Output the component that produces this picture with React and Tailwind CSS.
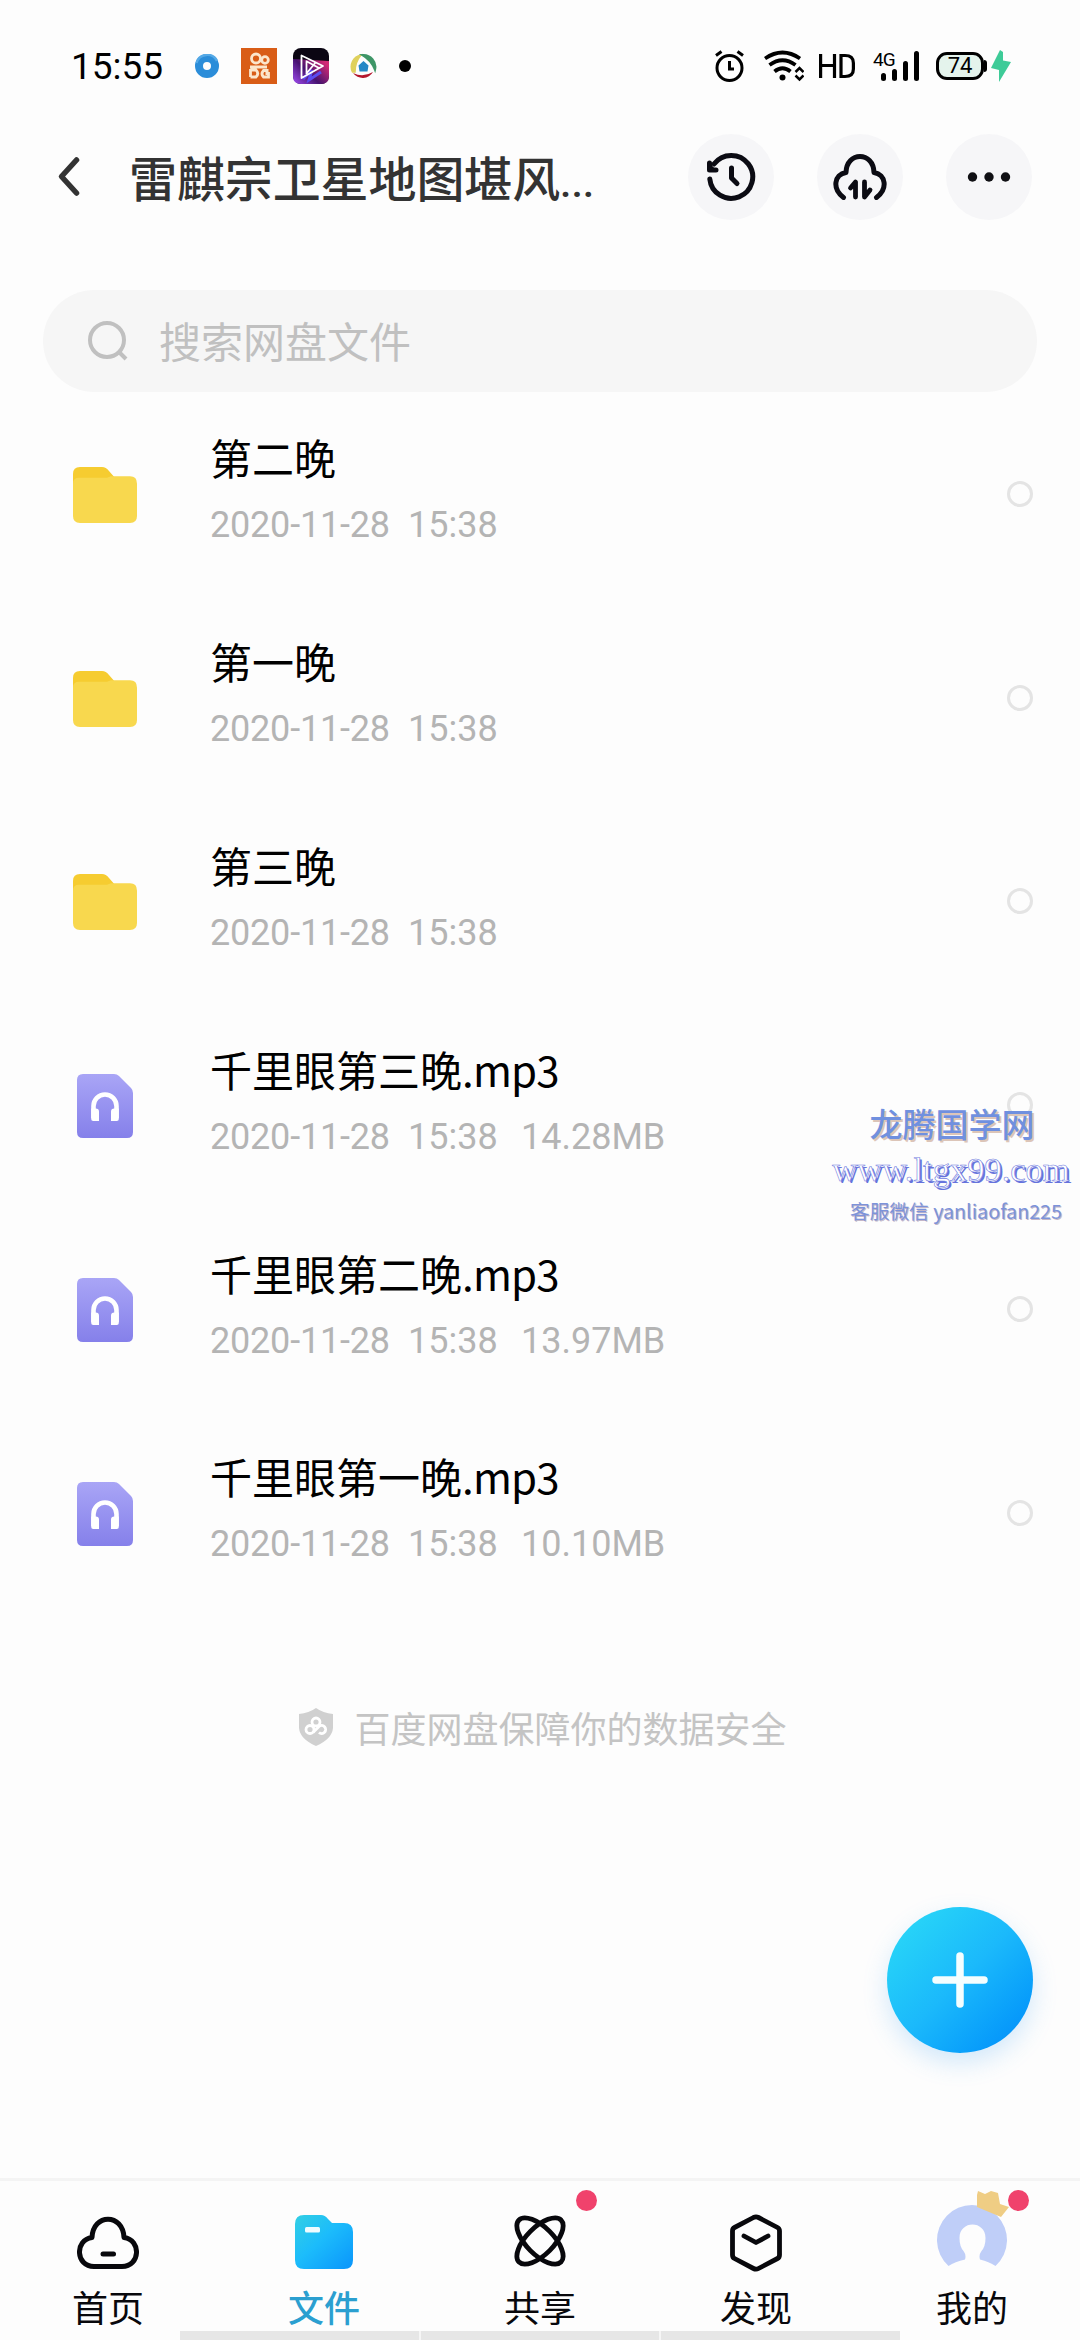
import React, { useState } from 'react';

const FILES = [
  { id: 1, type: 'folder', name: '第二晚', date: '2020-11-28', time: '15:38' },
  { id: 2, type: 'folder', name: '第一晚', date: '2020-11-28', time: '15:38' },
  { id: 3, type: 'folder', name: '第三晚', date: '2020-11-28', time: '15:38' },
  { id: 4, type: 'audio', name: '千里眼第三晚', ext: '.mp3', date: '2020-11-28', time: '15:38', size: '14.28MB' },
  { id: 5, type: 'audio', name: '千里眼第二晚', ext: '.mp3', date: '2020-11-28', time: '15:38', size: '13.97MB' },
  { id: 6, type: 'audio', name: '千里眼第一晚', ext: '.mp3', date: '2020-11-28', time: '15:38', size: '10.10MB' },
];

const FolderIcon = () => (
  <svg className="mt-[2px]" width="65" height="56" viewBox="0 0 64 57" preserveAspectRatio="none">
    <path d="M0 7Q0 0 7 0H29Q33 0 36 4L41 10V22H0Z" fill="#f6cc30" />
    <path d="M0 17Q0 11 6 11H34L38 9.500H57Q64 9.500 64 17V50Q64 57 57 57H7Q0 57 0 50Z" fill="#f8d84e" />
  </svg>
);

const AudioIcon = () => (
  <svg className="mt-[2px]" width="56" height="64" viewBox="0 0 56 64">
    <defs>
      <linearGradient id="audio" x1="0" y1="0" x2="0" y2="1">
        <stop offset="0" stopColor="#a9a5f6" />
        <stop offset="1" stopColor="#8580ea" />
      </linearGradient>
    </defs>
    <path d="M6 0H37Q40 0 42 2L54 14Q56 16 56 19V58Q56 64 50 64H6Q0 64 0 58V6Q0 0 6 0Z" fill="url(#audio)" />
    <path d="M16.500 44V32a11.500 11.500 0 0 1 23 0V44" fill="none" stroke="#fff" strokeWidth="4.600" />
    <path d="M14.200 34.500h4.500q3.300 0 3.300 3.300V47h-5.800q-2 0-2-2zM41.800 34.500h-4.500q-3.300 0-3.300 3.300V47h5.800q2 0 2-2z" fill="#fff" />
  </svg>
);

const StatusBar = () => (
  <div className="h-[132px] flex items-center justify-between pl-[71px] pr-[69px]">
    <div className="flex items-center">
      <span className="w-[124px] text-[37px] leading-none text-black font-['Roboto',sans-serif]">15:55</span>
      <svg width="24" height="24" viewBox="0 0 24 24">
        <circle cx="12" cy="12" r="8" fill="none" stroke="#2b8dd9" strokeWidth="8" />
        <path d="M1.500 9A11 11 0 0 1 22 7" fill="none" stroke="#55a9e6" strokeWidth="2.500" />
      </svg>
      <svg className="ml-[22px]" width="36" height="36" viewBox="0 0 36 36">
        <rect width="36" height="36" fill="#d95d17" />
        <g fill="none" stroke="#fbe6cc" strokeWidth="2.800">
          <circle cx="15" cy="10.500" r="4.500" />
          <circle cx="24" cy="12" r="3.300" />
          <path d="M9 19h17M9.500 21v8M9.500 22h5.500q3.500 3.500 0 7h-5.500M27.500 22.500h-5q-3 3.500 0 6.500h5v-3.500h-3" />
        </g>
      </svg>
      <svg className="ml-4" width="36" height="36" viewBox="0 0 36 36">
        <defs>
          <linearGradient id="clip" x1="0" y1="1" x2="1" y2="0.3">
            <stop offset="0" stopColor="#a34df5" />
            <stop offset="0.5" stopColor="#45126f" />
            <stop offset="1" stopColor="#d32a76" />
          </linearGradient>
        </defs>
        <rect width="36" height="36" rx="8" fill="#0b0613" />
        <path d="M0 11L36 13V28Q36 36 28 36H8Q0 36 0 28Z" fill="url(#clip)" />
        <path d="M10 31l9-9-3 10 12-8" stroke="#5b4bf0" strokeWidth="3" fill="none" />
        <path d="M8.500 7.500V30L30 18Z M13.500 12.500V25.500M13 13L26 20M13 26L23 14" fill="none" stroke="#fff" strokeWidth="1.800" strokeLinejoin="round" />
      </svg>
      <svg className="ml-[21px]" width="27" height="27" viewBox="0 0 27 27" fill="none">
        <path d="M2.500 19A12 12 0 0 1 11 2Q5 9 5 19Z" fill="#dfd15d" stroke="#dfd15d" strokeWidth="1.500" />
        <path d="M12 2A12 12 0 0 1 25 17Q21 7 12 2Z" fill="#3e9667" stroke="#3e9667" strokeWidth="2" />
        <path d="M3 20Q13 25 23 19A12 12 0 0 1 3 20Z" fill="#b4172d" />
        <path d="M13.500 8l5 4.500-1 6h-8l-1-6z" fill="#2588c6" />
      </svg>
      <span className="ml-[22px] w-3 h-3 rounded-full bg-black" />
    </div>

    <div className="flex items-center">
      <svg width="29" height="32" viewBox="0 0 29 32" fill="none" stroke="#000" strokeWidth="3">
        <circle cx="14.500" cy="18" r="12.500" />
        <path d="M14.500 11v8H19M1 5.500L6.500 1.500M28 5.500L22.500 1.500" />
      </svg>
      <svg className="ml-5" width="40" height="32" viewBox="0 0 40 32" fill="none" stroke="#000" strokeWidth="3.800">
        <path d="M1 8.500Q18.500-3.500 36 8.500M5.500 15Q18.500 5.500 31.500 15M10.500 21.500Q18.500 15 26.500 21.500" />
        <circle cx="18.500" cy="27.500" r="3" fill="#000" stroke="none" />
        <path d="M31.500 22l4-4 4 4M31.500 25.500l4 4 4-4" strokeWidth="2.500" />
      </svg>
      <svg className="ml-[15px]" width="36" height="26" viewBox="0 0 36 26" fill="none" stroke="#000" strokeWidth="3.200">
        <path d="M1.600 1V25M15.500 1V25M1.500 12.500H15.500M22 2.500V23.500H26Q34.400 23.500 34.400 16V10Q34.400 2.500 26 2.500Z" />
      </svg>
      <div className="relative ml-[18px] w-[46px] h-[30px] flex items-end justify-end gap-1.5">
        <span className="absolute left-0 -top-px text-[19px] leading-none tracking-[-1px] font-['Roboto',sans-serif] text-black">4G</span>
        <i className="w-[5px] h-2 rounded-sm bg-black" />
        <i className="w-[5px] h-3 rounded-sm bg-black" />
        <i className="w-[5px] h-5 rounded-sm bg-black" />
        <i className="w-[5px] h-[30px] rounded-sm bg-black" />
      </div>
      <div className="ml-[17px] w-12 h-7 border-[3px] border-black rounded-[11px] bg-[#e4f3ec] flex items-center justify-center text-[22px] leading-none font-['Roboto',sans-serif] text-black">74</div>
      <i className="w-[3px] h-3 rounded-r bg-black" />
      <svg className="ml-1" width="20" height="32" viewBox="0 0 20 32">
        <path d="M9 0L0 18l8 2v12l12-20-8-1.500V2z" fill="#3ecb98" />
      </svg>
    </div>
  </div>
);

const RoundButton = ({ children }) => (
  <button className="w-[86px] h-[86px] rounded-full bg-[#f6f6f8] flex items-center justify-center">{children}</button>
);

const Header = () => (
  <header className="h-[90px] flex items-center pl-[57px] pr-[48px]">
    <svg width="24" height="42" viewBox="0 0 24 42">
      <path d="M19.500 4L4.500 20.500L19.500 37" fill="none" stroke="#333" strokeWidth="5.500" strokeLinecap="round" strokeLinejoin="round" />
    </svg>
    <h1 className="ml-[48px] pt-[1px] text-[48px] leading-none tracking-[-0.100px] font-medium text-[#333] whitespace-nowrap">雷麒宗卫星地图堪风<span className="font-['Roboto',sans-serif] text-[41px]">...</span></h1>
    <div className="ml-auto flex gap-[43px]">
      <RoundButton>
        <svg width="50" height="50" viewBox="0 0 50 50" fill="none" stroke="#0b0b13" strokeWidth="5" strokeLinecap="round" strokeLinejoin="round">
          <path d="M3.800 27A21.500 21.500 0 1 0 8 12" />
          <path d="M3.500 11V18H10" fill="#0b0b13" />
          <path d="M25.500 16V26L31 31.500" />
        </svg>
      </RoundButton>
      <RoundButton>
        <svg width="54" height="46" viewBox="0 0 54 46" fill="none" stroke="#0b0b13" strokeWidth="5" strokeLinecap="round" strokeLinejoin="round">
          <path d="M10.500 43.500C-1 35 1 20.500 13 18.500C13.500-2.800 40.500-2.800 41 18.500C53 20.500 55 35 43.500 43.500" />
          <path d="M17.500 34L22.500 28V43M31.500 28V43L37 36" strokeWidth="4.800" />
        </svg>
      </RoundButton>
      <RoundButton>
        <svg width="44" height="10" viewBox="0 0 44 10" fill="#101014">
          <circle cx="5.500" cy="5" r="4.700" />
          <circle cx="22" cy="5" r="4.700" />
          <circle cx="38.500" cy="5" r="4.700" />
        </svg>
      </RoundButton>
    </div>
  </header>
);

const FileRow = ({ file }) => (
  <li className="h-[203.800px] flex items-center pl-[73px] pr-[47px]">
    <div className="w-16 flex items-center justify-center">
      {file.type === 'folder' ? <FolderIcon /> : <AudioIcon />}
    </div>
    <div className="ml-[73px] pb-[5px] flex-1">
      <div className="text-[42px] leading-[60px] text-black">{file.name}{file.ext && <span className="tracking-[-0.800px]">{file.ext}</span>}</div>
      <div className="mt-[8px] flex text-[36px] leading-[60px] text-[#b4b4b4] font-['Roboto',sans-serif]">
        <span className="w-[198px] tracking-[-0.200px]">{file.date}</span>
        <span className="w-[113px]">{file.time}</span>
        <span>{file.size}</span>
      </div>
    </div>
    <span className="w-[26px] h-[26px] rounded-full border-[3px] border-[#e4e4e4]" />
  </li>
);

const HomeIcon = () => (
  <svg width="62" height="54" viewBox="0 0 62 54" fill="none" stroke="#08080c" strokeWidth="5" strokeLinecap="round" strokeLinejoin="round">
    <path d="M17 50.500H45C63.500 50.500 64.500 24 47 21.500C46-3 16-3 15 21.500C-2.500 24-1.500 50.500 17 50.500Z" />
    <path d="M26 38H36.500" />
  </svg>
);

const FilesIcon = () => (
  <svg className="-mt-[3px]" width="58" height="54" viewBox="0 0 58 54">
    <defs>
      <linearGradient id="files" x1="0" y1="0" x2="1" y2="1">
        <stop offset="0" stopColor="#33cfe4" />
        <stop offset="0.450" stopColor="#1cbcfb" />
        <stop offset="1" stopColor="#0a95fb" />
      </linearGradient>
    </defs>
    <path d="M9 0H26Q30 0 33 4L37 8H49Q58 8 58 17V45Q58 54 49 54H9Q0 54 0 45V9Q0 0 9 0Z" fill="url(#files)" />
    <rect x="10" y="12" width="15" height="5.500" rx="1.500" fill="#effcff" />
  </svg>
);

const ShareIcon = () => (
  <svg className="-mt-[4px]" width="54" height="54" viewBox="0 0 54 54" fill="none" stroke="#08080c" strokeWidth="4.800">
    <ellipse cx="27" cy="27" rx="29.700" ry="13.600" transform="rotate(45 27 27)" />
    <ellipse cx="27" cy="27" rx="29.700" ry="13.600" transform="rotate(-45 27 27)" />
  </svg>
);

const DiscoverIcon = () => (
  <svg width="54" height="58" viewBox="0 0 54 58" fill="none" stroke="#08080c" strokeWidth="4.800" strokeLinecap="round" strokeLinejoin="round">
    <path d="M24.500 3.500Q27 2.200 29.500 3.500L48.500 13.500Q50.500 14.500 50.500 17V41Q50.500 43.500 48.500 44.500L29.500 54.500Q27 55.800 24.500 54.500L5.500 44.500Q3.500 43.500 3.500 41V17Q3.500 14.500 5.500 13.500Z" />
    <path d="M15 22L27 28.500L39 22" />
  </svg>
);

const AvatarIcon = () => (
  <svg className="overflow-visible -mt-[14px]" width="70" height="62" viewBox="0 0 70 62">
    <path d="M11.500 61A35 35 0 1 1 58.500 61Q52 56.500 43 54.500Q41.500 50 44.500 46Q48.500 41.500 48.500 33C48.500 15 22.500 15 22.500 33Q22.500 41.500 26.500 46Q29.500 50 28 54.500Q18 56.500 11.500 61Z" fill="#bfcef8" />
    <path d="M40-10L41-14L48-11L54-14L61-12L63-1L72 2L64 12L40 2Z" fill="#efcd84" />
  </svg>
);

const TABS = [
  { key: 'home', label: '首页', Icon: HomeIcon },
  { key: 'files', label: '文件', Icon: FilesIcon },
  { key: 'share', label: '共享', Icon: ShareIcon, dot: true },
  { key: 'discover', label: '发现', Icon: DiscoverIcon },
  { key: 'mine', label: '我的', Icon: AvatarIcon, dot: true },
];

const TabBar = ({ active, onChange }) => (
  <nav className="relative h-[162px] border-t-[3px] border-[#f4f4f4] grid grid-cols-5">
    {TABS.map(({ key, label, Icon, dot }) => (
      <button key={key} onClick={() => onChange(key)} className="relative flex flex-col items-center pt-[30px]">
        <span className="h-[64px] flex items-center justify-center"><Icon /></span>
        <span className={`mt-[11px] text-[36px] leading-[40px] ${active === key ? 'font-medium text-[#2b9fd0]' : 'text-[#08080c]'}`}>{label}</span>
        {dot && <i className="absolute left-[144px] top-[9px] w-[21px] h-[21px] rounded-full bg-[#f0426c]" />}
      </button>
    ))}
    {/* Gesture strip at the screen edge */}
    <div className="absolute left-[180px] bottom-0 w-[720px] h-[9px] bg-[#e6e6e6] flex justify-evenly">
      <i className="w-0.5 h-full bg-[#f6f6f6]" />
      <i className="w-0.5 h-full bg-[#f6f6f6]" />
    </div>
  </nav>
);

const App = () => {
  const [tab, setTab] = useState('files');

  return (
    <div className="relative w-[1080px] h-[2340px] overflow-hidden bg-[#fdfdfd] flex flex-col font-['Noto_Sans_CJK_SC',sans-serif]">
      <StatusBar />
      <Header />

      <div className="mt-[68px] mx-[43px] h-[102px] shrink-0 rounded-full bg-[#f6f6f6] flex items-center pl-[45px]">
        <svg width="40" height="40" viewBox="0 0 40 40" fill="none" stroke="#c0c0c0" strokeWidth="4">
          <circle cx="19" cy="19" r="17" />
          <path d="M31 31L38 38" />
        </svg>
        <span className="ml-[31px] pb-[3px] text-[42px] leading-[60px] text-[#c0c0c0]">搜索网盘文件</span>
      </div>

      <ul>
        {FILES.map((file) => <FileRow key={file.id} file={file} />)}
      </ul>

      <div className="mt-[85px] pl-[5px] flex items-center justify-center gap-[20px] text-[36px] leading-[54px] text-[#c4c4c4]">
        <svg width="36" height="38" viewBox="0 0 36 38">
          <path d="M18 0Q25 5 35 6V20Q34 31 18 38Q2 31 1 20V6Q11 5 18 0Z" fill="#d0d0d0" />
          <g fill="none" stroke="#fff" strokeWidth="2.800">
            <circle cx="18" cy="14" r="4" />
            <circle cx="12" cy="21.500" r="4" />
            <path d="M15 24.500L21 18.500A4 4 0 1 1 21 24.500" />
          </g>
        </svg>
        <span>百度网盘保障你的数据安全</span>
      </div>

      <div className="mt-auto">
        <TabBar active={tab} onChange={setTab} />
      </div>

      {/* Floating add button */}
      <button className="absolute left-[887px] top-[1907px] w-[146px] h-[146px] rounded-full bg-linear-to-br from-[#27d2f8] from-15% via-[#1bb9fb] to-[#0593fa] to-90% shadow-[0_10px_24px_rgba(60,160,240,0.22)] flex items-center justify-center">
        <svg width="58" height="58" viewBox="0 0 58 58" stroke="#f4feff" strokeWidth="7.500" strokeLinecap="round">
          <path d="M29 5V53M5 29H53" />
        </svg>
      </button>

      {/* Site watermark */}
      <div className="absolute left-[830px] top-[1099px] w-[242px] flex flex-col items-center whitespace-nowrap">
        <div className="ml-[2px] text-[33px] leading-[48px] font-medium text-[#7090df] [text-shadow:2px_2px_0_#dcc5b8]">龙腾国学网</div>
        <div className="text-[34.500px] leading-[44px] text-white font-['Liberation_Serif',serif] [-webkit-text-stroke:0.600px_#6f7be0] [text-shadow:2px_2px_0_#6673dc]">www.ltgx99.com</div>
        <div className="mt-[5px] ml-[10px] text-[19.700px] leading-[30px] text-[#7c93da] [text-shadow:1px_1px_0_#c3b6c8]">客服微信 yanliaofan225</div>
      </div>
    </div>
  );
};

export default App;
